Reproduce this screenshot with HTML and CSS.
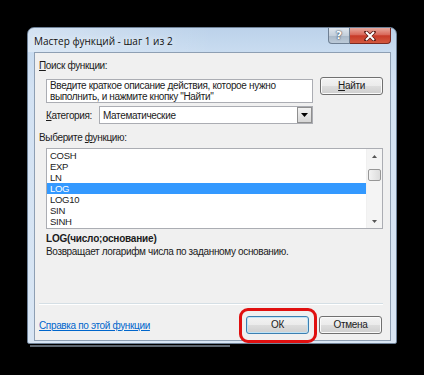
FILE: index.html
```html
<!DOCTYPE html>
<html lang="ru">
<head>
  <meta charset="UTF-8">
  <title>Мастер функций</title>
  <link rel="stylesheet" href="styles.css">
</head>
<body>
  <div id="finestra">
    <div id="titolo">
      <span class="testoTitolo">Мастер функций - шаг 1 из 2</span>
      <div class="pulsantiTitolo">
        <div id="aiuto">?</div>
        <div id="chiudi">
          <svg width="14" height="10" viewBox="0 0 14 10">
            <path d="M3 1 L11 9 M11 1 L3 9" stroke="#5a1a14" stroke-width="3.6" stroke-linecap="round"/>
            <path d="M3 1 L11 9 M11 1 L3 9" stroke="#fff" stroke-width="2"/>
          </svg>
        </div>
      </div>
    </div>

    <div id="corpo">
      <div class="etichetta"><u>П</u>оиск функции:</div>

      <div class="riga ricerca">
        <div class="casella">Введите краткое описание действия, которое нужно выполнить, и нажмите кнопку "Найти"</div>
        <div class="pulsante"><u>Н</u>айти</div>
      </div>

      <div class="riga categoria">
        <span class="etiCategoria"><u>К</u>атегория:</span>
        <div class="tendina">
          <span>Математические</span>
          <span class="freccia"><svg width="7" height="4" viewBox="0 0 7 4"><path d="M0 0 H7 L3.5 4 Z" fill="#000"/></svg></span>
        </div>
      </div>

      <div class="etichetta secondo">Выберите <u>ф</u>ункцию:</div>

      <div class="lista">
        <div class="voci">
          <div class="voce">COSH</div>
          <div class="voce">EXP</div>
          <div class="voce">LN</div>
          <div class="voce scelta">LOG</div>
          <div class="voce">LOG10</div>
          <div class="voce">SIN</div>
          <div class="voce">SINH</div>
        </div>
        <div class="barra">
          <svg class="su" width="5" height="3" viewBox="0 0 5 3"><path d="M0 3 H5 L2.5 0 Z" fill="#555"/></svg>
          <div class="cursore"></div>
          <svg class="giu" width="5" height="3" viewBox="0 0 5 3"><path d="M0 0 H5 L2.5 3 Z" fill="#555"/></svg>
        </div>
      </div>

      <div class="firma">LOG(число;основание)</div>
      <div class="descrizione">Возвращает логарифм числа по заданному основанию.</div>

      <div class="separatore"></div>

      <div class="piede">
        <a class="link" href="#">Справка по этой функции</a>
        <div class="pulsanti">
          <div class="pulsante ok">ОК</div>
          <div class="pulsante">Отмена</div>
        </div>
      </div>
    </div>
  </div>
  <div id="striscia"></div>
</body>
</html>
```

FILE: styles.css
```css
html, body {
  margin: 0;
  padding: 0;
  background: black;
  width: 424px;
  height: 375px;
  overflow: hidden;
  font-family: "Liberation Sans", Arial, sans-serif;
  font-size: 10px;
  letter-spacing: -0.35px;
  color: #1b1b1b;
}

#finestra {
  margin: 27px 0 0 27px;
  width: 370px;
  height: 317px;
  box-sizing: border-box;
  border: 1px solid #6f8298;
  border-radius: 7px 7px 2px 2px;
  background: linear-gradient(to bottom, #bcd2ea 0px, #c9dcf0 24px, #d3e2f3 60px, #d9e6f4 100%);
  display: flex;
  flex-direction: column;
}

#titolo {
  height: 24px;
  display: flex;
  justify-content: space-between;
  align-items: flex-start;
  background: linear-gradient(to right, rgba(255,255,255,0.35), rgba(255,255,255,0) 50%);
  border-radius: 6px 6px 0 0;
}

.testoTitolo {
  font-family: "Open Sans", "Noto Sans", sans-serif;
  font-size: 10px;
  letter-spacing: 0;
  color: #101010;
  margin: 6px 0 0 6px;
  text-shadow: 0 0 6px rgba(255,255,255,0.9);
}

.pulsantiTitolo {
  display: flex;
  margin-right: 5px;
}

#aiuto {
  width: 22px;
  height: 16px;
  box-sizing: border-box;
  border: 1px solid #6e7f93;
  border-top: none;
  border-radius: 0 0 0 4px;
  background: linear-gradient(to bottom, #dfe6ee 0%, #c4cfdb 50%, #a9b8c8 51%, #bccad8 100%);
  color: #fff;
  font-family: "DejaVu Sans", sans-serif;
  font-weight: bold;
  font-size: 11px;
  letter-spacing: 0;
  line-height: 15px;
  text-align: center;
  text-shadow: 0 0 2px #2d3e52, 0 0 1px #2d3e52;
}

#chiudi {
  width: 41px;
  height: 16px;
  box-sizing: border-box;
  border: 1px solid #7a2a22;
  border-top: none;
  border-left: none;
  border-radius: 0 0 4px 0;
  background: linear-gradient(to bottom, #e9a99d 0%, #d9685a 45%, #c73a28 52%, #d3583f 100%);
  display: flex;
  align-items: center;
  justify-content: center;
}

#corpo {
  margin: 0 5px 2px 6px;
  flex: 1;
  background: #f0f0f0;
  border: 1px solid #8e9fb3;
  display: flex;
  flex-direction: column;
  padding: 0 7px 0 4px;
}

.etichetta {
  line-height: 13px;
  margin-top: 6px;
}

.etichetta.secondo {
  margin-top: 7px;
}

.riga {
  display: flex;
  padding-left: 7px;
}

.ricerca {
  margin-top: 5px;
  gap: 7px;
}

.casella {
  margin-top: 2px;
  width: 267px;
  height: 24px;
  box-sizing: border-box;
  border: 1px solid #abadb3;
  background: white;
  padding: 0 3px;
  line-height: 11px;
}

.pulsante {
  width: 63px;
  height: 18px;
  box-sizing: border-box;
  border: 1px solid #707070;
  border-radius: 3px;
  background: linear-gradient(to bottom, #f3f3f3 0%, #ebebeb 50%, #dddddd 51%, #cfcfcf 100%);
  box-shadow: inset 0 0 0 1px #fafafa;
  text-align: center;
  line-height: 16px;
  color: #1b1b1b;
}

.categoria {
  margin-top: 3px;
  align-items: center;
}

.etiCategoria {
  width: 53px;
}

.tendina {
  width: 214px;
  height: 18px;
  box-sizing: border-box;
  border: 1px solid #abadb3;
  background: white;
  display: flex;
  justify-content: space-between;
  align-items: center;
  padding-left: 3px;
}

.freccia {
  width: 15px;
  height: 16px;
  box-sizing: border-box;
  border: 1px solid #8f8f8f;
  background: linear-gradient(to bottom, #f2f2f2, #d6d6d6);
  display: flex;
  align-items: center;
  justify-content: center;
}

.lista {
  margin: 4px 0 0 7px;
  height: 81px;
  box-sizing: border-box;
  border: 1px solid #abadb3;
  background: white;
  display: flex;
}

.voci {
  flex: 1;
  padding-top: 1px;
}

.voce {
  height: 11px;
  line-height: 11px;
  padding-left: 3px;
  font-size: 9.5px;
  letter-spacing: -0.3px;
}

.voce.scelta {
  background: #3399ff;
  color: white;
}

.barra {
  width: 15px;
  background: #f4f4f4;
  border-left: 1px solid #f0f0f0;
  display: flex;
  flex-direction: column;
  align-items: center;
}

.barra .su {
  margin-top: 6px;
}

.barra .cursore {
  margin-top: 11px;
  width: 13px;
  height: 12px;
  box-sizing: border-box;
  border: 1px solid #979797;
  border-radius: 2px;
  background: linear-gradient(to right, #f3f3f3, #dcdcdc);
}

.barra .giu {
  margin-top: auto;
  margin-bottom: 5px;
}

.firma {
  margin: 3px 0 0 7px;
  font-weight: bold;
  font-size: 10px;
  letter-spacing: -0.2px;
  line-height: 13px;
}

.descrizione {
  margin-left: 7px;
  line-height: 13px;
}

.separatore {
  margin-top: 45px;
  border-top: 1px solid #d5dfe5;
  border-bottom: 1px solid #ffffff;
}

.piede {
  margin-top: 11px;
  display: flex;
  justify-content: space-between;
  align-items: center;
}

.link {
  color: #0066cc;
  text-decoration: underline;
}

.pulsanti {
  display: flex;
  gap: 10px;
  margin-right: 1px;
}

.pulsante.ok {
  position: relative;
  border-color: #3c7fb1;
  box-shadow: inset 0 0 0 1px #bfe3f6;
}

.pulsante.ok::after {
  content: "";
  position: absolute;
  top: -9px;
  bottom: -10px;
  left: -8px;
  right: -9px;
  border: 3px solid #e01010;
  border-radius: 9px;
}

#striscia {
  margin: 1px 0 0 30px;
  width: 200px;
  height: 2px;
  background: #5d6670;
}
```
